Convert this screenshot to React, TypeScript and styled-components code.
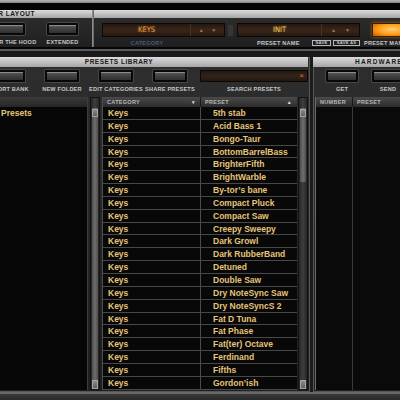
import styled, { createGlobalStyle } from "styled-components"

const presets = [
  "5th stab", "Acid Bass 1", "Bongo-Taur", "BottomBarrelBass", "BrighterFifth",
  "BrightWarble", "By-tor\u2019s bane", "Compact Pluck", "Compact Saw", "Creepy Sweepy",
  "Dark Growl", "Dark RubberBand", "Detuned", "Double Saw", "Dry NoteSync Saw",
  "Dry NoteSyncS 2", "Fat D Tuna", "Fat Phase", "Fat(ter) Octave", "Ferdinand",
  "Fifths", "Gordon\u2019ish",
]

const GlobalStyle = createGlobalStyle`
  html, body {
    margin: 0;
    padding: 0;
    background: #181818;
  }
  body {
    font-family: "Liberation Sans", Arial, sans-serif;
  }
`

const Viewport = styled.div`
  width: 400px;
  height: 400px;
  overflow: hidden;
  background: #1c1c1c;
`

// the screenshot is a crop of a wider window, so the frame starts left of the view
const Frame = styled.div`
  width: 560px;
  height: 400px;
  margin-left: -70px;
  display: flex;
  flex-direction: column;
`

const TopEdge = styled.div`
  height: 3px;
  flex: none;
  background: linear-gradient(#b8b8b8, #848484);
`

const Band = styled.div`
  height: 7px;
  flex: none;
  background: #050505;
`

const LayoutBar = styled.div`
  height: 37px;
  flex: none;
  display: flex;
  background: linear-gradient(#2f2f2f, #1f1f1f);
`

const Section = styled.div<{ $width?: number }>`
  width: ${p => (p.$width ? `${p.$width}px` : "auto")};
  flex: ${p => (p.$width ? "none" : "1")};
  display: flex;
  flex-direction: column;
`

const SectionDivider = styled.div`
  width: 2px;
  flex: none;
  background: linear-gradient(90deg, #9c9c9c, #5c5c5c);
`

const Title = styled.div<{ $h: number; $pad?: number; $spacing?: number }>`
  height: ${p => p.$h}px;
  line-height: ${p => p.$h}px;
  flex: none;
  background: linear-gradient(#dcdcdc, #a6a6a6);
  color: #1a1a1a;
  font-weight: bold;
  font-size: 6.5px;
  letter-spacing: ${p => p.$spacing ?? 0.5}px;
  white-space: nowrap;
  overflow: hidden;
  text-align: ${p => (p.$pad !== undefined ? "left" : "center")};
  padding-left: ${p => p.$pad ?? 0}px;
`

const EditorBody = styled.div`
  display: flex;
  justify-content: flex-end;
  gap: 3px;
  padding: 5px 4.5px 0 0;
`

const Toolbar = styled.div<{ $pad: number }>`
  height: 30px;
  flex: none;
  box-sizing: border-box;
  display: flex;
  align-items: flex-start;
  padding: 3px 0 0 ${p => p.$pad}px;
`

const ToolItem = styled.div<{ $w: number }>`
  width: ${p => p.$w}px;
  flex: none;
  display: flex;
  flex-direction: column;
  align-items: center;
  gap: 4px;
`

const HwButton = styled.div<{ $w: number }>`
  width: ${p => p.$w}px;
  height: 12px;
  box-sizing: border-box;
  border: 2px solid #080808;
  border-radius: 1px;
  background: linear-gradient(#5c5c5c, #444 40%, #2f2f2f);
  box-shadow: 0 0 0 1px #474747, inset 0 1px 0 #8a8a8a;
`

const Label = styled.div<{ $w?: number; $left?: boolean }>`
  ${p => (p.$w ? `width: ${p.$w}px;` : "")}
  flex: none;
  height: 6px;
  line-height: 6px;
  font-size: 5.6px;
  font-weight: bold;
  letter-spacing: 0.2px;
  color: #c6c6c6;
  text-transform: uppercase;
  white-space: nowrap;
  text-align: ${p => (p.$left ? "left" : "center")};
`

const FaintLabel = styled(Label)`
  color: #4a5a7a;
`

const PresetBody = styled.div`
  display: flex;
  flex-direction: column;
  padding: 5px 0 0 8px;
`

const DisplayRow = styled.div`
  display: flex;
  align-items: center;
  height: 14px;
`

const Display = styled.div<{ $w: number; $gap: number }>`
  width: ${p => p.$w}px;
  height: 14px;
  flex: none;
  box-sizing: border-box;
  display: flex;
  margin-right: ${p => p.$gap}px;
  border: 1px solid #0b0806;
  background: linear-gradient(#24170f, #3a2619 50%, #26180f);
`

const DisplayText = styled.div<{ $color: string }>`
  flex: 1;
  text-align: center;
  line-height: 12px;
  font-family: "DejaVu Sans Condensed", "DejaVu Sans", sans-serif;
  font-size: 7.5px;
  color: ${p => p.$color};
  text-shadow: 0 0 3px ${p => p.$color}88;
`

const Arrows = styled.div<{ $w: number }>`
  width: ${p => p.$w}px;
  flex: none;
  display: flex;
  justify-content: space-evenly;
  align-items: center;
  border-left: 1px solid #4a3322;
  font-size: 5px;
  color: #a8743a;
`

const Nub = styled.div`
  width: 5px;
  height: 11px;
  flex: none;
  margin-right: 4px;
  background: #363636;
`

const OrangeButton = styled.div`
  width: 40px;
  height: 14px;
  flex: none;
  box-sizing: border-box;
  border: 1px solid #3a1c00;
  background: radial-gradient(ellipse at 50% 45%, #ffd070, #ff9a18 55%, #c25a00);
  box-shadow: 0 0 3px #ff8a00aa;
`

const LabelRow = styled.div`
  display: flex;
  align-items: center;
  margin-top: 3px;
  gap: 2px;
`

const Spacer = styled.div<{ $w: number }>`
  width: ${p => p.$w}px;
  flex: none;
`

const SaveBox = styled.div<{ $w: number }>`
  width: ${p => p.$w}px;
  height: 6px;
  flex: none;
  box-sizing: border-box;
  border: 1px solid #b4b4b4;
  font-size: 4.2px;
  line-height: 4px;
  font-weight: bold;
  color: #c8c8c8;
  text-align: center;
  letter-spacing: 0.2px;
`

const Gap = styled.div`
  height: 10px;
  flex: none;
  background: linear-gradient(#050505 0 2px, #5c5c5c 2px 4px, #1a1a1a 4px);
`

const PanelRow = styled.div`
  height: 335px;
  flex: none;
  display: flex;
  gap: 3px;
`

const Panel = styled.div<{ $w: number; $padRight?: number }>`
  width: ${p => p.$w}px;
  flex: none;
  display: flex;
  flex-direction: column;
  box-sizing: border-box;
  padding: 0 ${p => p.$padRight ?? 0}px 2px 0;
  background: linear-gradient(#2e2e2e, #1f1f1f);
  box-shadow: inset 0 0 0 1px #575757;
`

const SearchItem = styled(ToolItem)`
  margin-left: 3px;
`

const SearchField = styled.div`
  width: 108px;
  height: 12px;
  box-sizing: border-box;
  display: flex;
  justify-content: flex-end;
  align-items: center;
  padding-right: 3px;
  border: 1px solid #0b0806;
  background: linear-gradient(#221810, #33241a 50%, #221710);
  color: #d87a30;
  font-size: 8px;
  line-height: 8px;
`

const TableArea = styled.div<{ $pad?: number }>`
  flex: 1;
  min-height: 0;
  display: flex;
  padding-left: ${p => p.$pad ?? 0}px;
`

const FolderPane = styled.div`
  width: 158px;
  flex: none;
  margin-right: 2px;
  display: flex;
  flex-direction: column;
  box-sizing: border-box;
  border-right: 1px solid #3c3c3c;
  background: #070707;
`

const PaneHead = styled.div`
  height: 10px;
  flex: none;
  background: linear-gradient(#3a3a3a, #262626);
`

const FolderItem = styled.div`
  height: 13px;
  line-height: 13px;
  padding-left: 71px;
  font-size: 8.5px;
  font-weight: bold;
  color: #e6c47a;
`

const ScrollTrack = styled.div<{ $gap: number }>`
  width: 10px;
  flex: none;
  margin-right: ${p => p.$gap}px;
  box-sizing: border-box;
  display: flex;
  flex-direction: column;
  padding: 10px 1px 0;
  border: 1px solid #121212;
  background: linear-gradient(90deg, #262626, #3e3e3e 50%, #262626);
`

const ScrollThumb = styled.div<{ $h?: number }>`
  ${p => (p.$h ? `height: ${p.$h}px; flex: none;` : "flex: 1;")}
  padding-top: 1px;
  background: linear-gradient(90deg, #4e4e4e, #6e6e6e 50%, #4e4e4e);
`

const Grip = styled.div`
  width: 6px;
  height: 8px;
  margin: 0 auto;
  box-sizing: border-box;
  border: 1px solid #a4a4a4;
  background: linear-gradient(#8a8a8a, #5e5e5e);
`

const ScrollEnd = styled(Grip)`
  margin: auto auto 0;
  height: 9px;
`

const Table = styled.div`
  width: 195px;
  flex: none;
  margin-right: 1px;
  display: flex;
  flex-direction: column;
  box-sizing: border-box;
  border-left: 1px solid #4e4e4e;
  background: #080808;
`

const HeadRow = styled.div<{ $cols: string }>`
  height: 10px;
  flex: none;
  display: grid;
  grid-template-columns: ${p => p.$cols};
  background: linear-gradient(#4a4a4a, #2c2c2c);
`

const HeadCell = styled.div<{ $line?: boolean }>`
  display: flex;
  justify-content: space-between;
  align-items: center;
  padding: 0 5px 0 4px;
  font-size: 5.5px;
  font-weight: bold;
  letter-spacing: 0.3px;
  color: #b8b8b8;
  border-right: ${p => (p.$line ? "1px solid #1a1a1a" : "none")};
`

const SortMark = styled.span`
  font-size: 5px;
  color: #d8d8d8;
`

const Row = styled.div`
  height: 12.85px;
  flex: none;
  box-sizing: border-box;
  display: grid;
  grid-template-columns: 98px 1fr;
  border-bottom: 1px solid #484848;
`

const Cell = styled.div<{ $pad: number; $line?: boolean }>`
  padding-left: ${p => p.$pad}px;
  line-height: 12px;
  font-size: 8.5px;
  font-weight: bold;
  color: #e6c47a;
  white-space: nowrap;
  border-right: ${p => (p.$line ? "1px solid #4c4c4c" : "none")};
`

const HwTable = styled.div`
  flex: 1;
  display: flex;
  flex-direction: column;
  box-sizing: border-box;
  border-left: 1px solid #6a6a6a;
  background: #0a0a0a;
`

const HwBody = styled.div`
  flex: 1;
  display: grid;
  grid-template-columns: 37px 1fr;
`

const HwColumn = styled.div<{ $line?: boolean }>`
  border-right: ${p => (p.$line ? "1px solid #3a3a3a" : "none")};
`

const BottomStrip = styled.div`
  height: 8px;
  flex: none;
  box-sizing: border-box;
  border-top: 2px solid #686868;
  background: linear-gradient(#3a3a3a, #2a2a2a);
`

function Tool({ w, bw, label }: { w: number; bw: number; label: string }) {
  return (
    <ToolItem $w={w}>
      <HwButton $w={bw} />
      <Label>{label}</Label>
    </ToolItem>
  )
}

export default function App() {
  return (
    <Viewport>
      <GlobalStyle />
      <Frame>
        <TopEdge />
        <Band />
        <LayoutBar>
          <Section $width={162}>
            <Title $h={8} $pad={46}>EDITOR LAYOUT</Title>
            <EditorBody>
              <Tool w={50} bw={31} label="Under the hood" />
              <Tool w={50} bw={31} label="Extended" />
            </EditorBody>
          </Section>
          <SectionDivider />
          <Section>
            <Title $h={8} />
            <PresetBody>
              <DisplayRow>
                <Display $w={123} $gap={3}>
                  <DisplayText $color="#ec9a3e">KEYS</DisplayText>
                  <Arrows $w={33}><span>▲</span><span>▼</span></Arrows>
                </Display>
                <Nub />
                <Display $w={123} $gap={12}>
                  <DisplayText $color="#ecc454">INIT</DisplayText>
                  <Arrows $w={37}><span>▲</span><span>▼</span></Arrows>
                </Display>
                <OrangeButton />
              </DisplayRow>
              <LabelRow>
                <FaintLabel $w={90}>Category</FaintLabel>
                <Spacer $w={61} />
                <Label $w={53} $left>Preset name</Label>
                <SaveBox $w={19}>SAVE</SaveBox>
                <SaveBox $w={27}>SAVE AS</SaveBox>
                <Spacer $w={0} />
                <Label $left>Preset manager</Label>
              </LabelRow>
            </PresetBody>
          </Section>
        </LayoutBar>
        <Gap />
        <PanelRow>
          <Panel $w={380} $padRight={2}>
            <Title $h={10}>PRESETS LIBRARY</Title>
            <Toolbar $pad={51}>
              <Tool w={54} bw={34} label="Import bank" />
              <Tool w={54} bw={34} label="New folder" />
              <Tool w={54} bw={34} label="Edit categories" />
              <Tool w={54} bw={34} label="Share presets" />
              <SearchItem $w={108}>
                <SearchField>×</SearchField>
                <Label>Search presets</Label>
              </SearchItem>
            </Toolbar>
            <TableArea>
              <FolderPane>
                <PaneHead />
                <FolderItem>Presets</FolderItem>
              </FolderPane>
              <ScrollTrack $gap={2}>
                <ScrollThumb>
                  <Grip />
                </ScrollThumb>
                <ScrollEnd />
              </ScrollTrack>
              <Table>
                <HeadRow $cols="98px 1fr">
                  <HeadCell $line>CATEGORY<SortMark>▾</SortMark></HeadCell>
                  <HeadCell>PRESET<SortMark>▲</SortMark></HeadCell>
                </HeadRow>
                {presets.map(name => (
                  <Row key={name}>
                    <Cell $pad={5} $line>Keys</Cell>
                    <Cell $pad={12}>{name}</Cell>
                  </Row>
                ))}
              </Table>
              <ScrollTrack $gap={0}>
                <ScrollThumb $h={73}>
                  <Grip />
                </ScrollThumb>
                <ScrollEnd />
              </ScrollTrack>
            </TableArea>
          </Panel>
          <Panel $w={177}>
            <Title $h={10} $pad={42} $spacing={1.2}>HARDWARE PRESETS</Title>
            <Toolbar $pad={6}>
              <Tool w={46} bw={32} label="Get" />
              <Tool w={46} bw={32} label="Send" />
            </Toolbar>
            <TableArea $pad={2}>
              <HwTable>
                <HeadRow $cols="37px 1fr">
                  <HeadCell $line>NUMBER</HeadCell>
                  <HeadCell>PRESET</HeadCell>
                </HeadRow>
                <HwBody>
                  <HwColumn $line />
                  <HwColumn />
                </HwBody>
              </HwTable>
            </TableArea>
          </Panel>
        </PanelRow>
        <BottomStrip />
      </Frame>
    </Viewport>
  )
}
